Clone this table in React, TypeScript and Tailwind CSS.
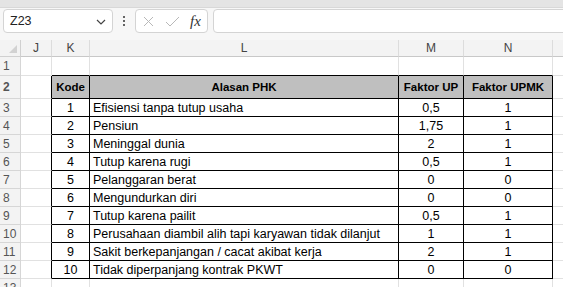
import React from "react";

const rows: [string, string, string, string][] = [
  ["1", "Efisiensi tanpa tutup usaha", "0,5", "1"],
  ["2", "Pensiun", "1,75", "1"],
  ["3", "Meninggal dunia", "2", "1"],
  ["4", "Tutup karena rugi", "0,5", "1"],
  ["5", "Pelanggaran berat", "0", "0"],
  ["6", "Mengundurkan diri", "0", "0"],
  ["7", "Tutup karena pailit", "0,5", "1"],
  ["8", "Perusahaan diambil alih tapi karyawan tidak dilanjut", "1", "1"],
  ["9", "Sakit berkepanjangan / cacat akibat kerja", "2", "1"],
  ["10", "Tidak diperpanjang kontrak PKWT", "0", "0"],
];

const rh =
  "w-[21px] shrink-0 bg-[#f3f3f3] border-r border-b border-[#d6d6d6] text-[#555] text-[12px] pl-[3px] flex items-center";

export default function App() {
  return (
    <div
      className="w-[563px] h-[287px] overflow-hidden bg-white text-black"
      style={{ fontFamily: '"Liberation Sans", Arial, sans-serif' }}
    >
      <div className="h-[8px] bg-[#e4e4e4] border-b border-[#d8d8d8]" />
      <div className="h-[32px] bg-[#f7f7f7] flex items-start pt-[1px] pl-[3px]">
        <div className="w-[110px] h-[24px] bg-white border border-[#d4d4d4] rounded-[4px] flex items-center pl-[6px] pr-[6px]">
          <span className="text-[12.5px] text-[#222] flex-1">Z23</span>
          <svg width="10" height="6" viewBox="0 0 10 6" className="mt-[1px]">
            <path d="M1 1 L5 5 L9 1" fill="none" stroke="#444" strokeWidth="1.2" />
          </svg>
        </div>
        <div className="w-[22px] h-[24px] flex flex-col items-center justify-center gap-[2px]">
          <div className="w-[2px] h-[2px] bg-[#333] rounded-full" />
          <div className="w-[2px] h-[2px] bg-[#333] rounded-full" />
          <div className="w-[2px] h-[2px] bg-[#333] rounded-full" />
        </div>
        <div className="w-[73px] h-[24px] bg-white border border-[#d4d4d4] rounded-[4px] flex items-center pl-[7px]">
          <svg width="11" height="11" viewBox="0 0 11 11">
            <path d="M1 1 L10 10 M10 1 L1 10" stroke="#b8b8b8" strokeWidth="1" fill="none" />
          </svg>
          <svg width="15" height="11" viewBox="0 0 15 11" className="ml-[11px]">
            <path d="M1 6 L5 10 L14 1" stroke="#b8b8b8" strokeWidth="1" fill="none" />
          </svg>
          <span
            className="ml-[10px] text-[15px] italic text-[#333] leading-none"
            style={{ fontFamily: '"Liberation Serif", "Times New Roman", serif' }}
          >
            fx
          </span>
        </div>
        <div className="flex-1 h-[24px] ml-[5px] mr-[-6px] bg-white border border-[#d4d4d4] rounded-[4px]" />
      </div>

      <div className="flex h-[17px] text-[12px] text-[#444]">
        <div className="w-[21px] shrink-0 bg-[#f3f3f3] border-r border-b border-[#d0d0d0] relative">
          <svg width="8" height="8" viewBox="0 0 8 8" className="absolute right-[3px] bottom-[3px]">
            <path d="M8 0 L8 8 L0 8 Z" fill="#d2d2d2" />
          </svg>
        </div>
        <div className="w-[31px] shrink-0 bg-[#f3f3f3] border-r border-b border-r-[#dcdcdc] border-b-[#c8c8c8] flex items-center justify-center">J</div>
        <div className="w-[38px] shrink-0 bg-[#f3f3f3] border-r border-b border-r-[#dcdcdc] border-b-[#c8c8c8] flex items-center justify-center">K</div>
        <div className="w-[309px] shrink-0 bg-[#f3f3f3] border-r border-b border-r-[#dcdcdc] border-b-[#c8c8c8] flex items-center justify-center">L</div>
        <div className="w-[65px] shrink-0 bg-[#f3f3f3] border-r border-b border-r-[#dcdcdc] border-b-[#c8c8c8] flex items-center justify-center">M</div>
        <div className="w-[89px] shrink-0 bg-[#f3f3f3] border-r border-b border-r-[#dcdcdc] border-b-[#c8c8c8] flex items-center justify-center">N</div>
        <div className="flex-1 bg-[#f3f3f3] border-b border-b-[#c8c8c8]" />
      </div>

      <div className="flex h-[19px]">
        <div className={rh}>1</div>
        <div className="w-[31px] shrink-0 border-r border-b border-[#e1e1e1]" />
        <div className="w-[38px] shrink-0 border-r border-b border-r-[#e1e1e1] border-b-black" />
        <div className="w-[309px] shrink-0 border-r border-b border-r-[#e1e1e1] border-b-black" />
        <div className="w-[65px] shrink-0 border-r border-b border-r-[#e1e1e1] border-b-black" />
        <div className="w-[89px] shrink-0 border-r border-b border-r-[#e1e1e1] border-b-black" />
        <div className="flex-1 border-b border-[#e1e1e1]" />
      </div>

      <div className="flex h-[23px] text-[11.5px] font-bold">
        <div className={rh}>2</div>
        <div className="w-[31px] shrink-0 border-r border-b border-r-black border-b-[#e1e1e1]" />
        <div className="w-[38px] shrink-0 bg-[#bfbfbf] border-r border-b border-black flex items-center justify-center pt-[1px]">Kode</div>
        <div className="w-[309px] shrink-0 bg-[#bfbfbf] border-r border-b border-black flex items-center justify-center pt-[1px]">Alasan PHK</div>
        <div className="w-[65px] shrink-0 bg-[#bfbfbf] border-r border-b border-black flex items-center justify-center pt-[1px]">Faktor UP</div>
        <div className="w-[89px] shrink-0 bg-[#bfbfbf] border-r border-b border-black flex items-center justify-center pt-[1px]">Faktor UPMK</div>
        <div className="flex-1 border-b border-[#e1e1e1]" />
      </div>

      {rows.map(([k, l, m, n], i) => (
        <div key={k} className="flex h-[18px] text-[12.5px]">
          <div className={rh}>{i + 3}</div>
          <div className="w-[31px] shrink-0 border-r border-b border-r-black border-b-[#e1e1e1]" />
          <div className="w-[38px] shrink-0 border-r border-b border-black flex items-center justify-center pt-[1px]">{k}</div>
          <div className="w-[309px] shrink-0 border-r border-b border-black flex items-center pl-[3px] pt-[1px] whitespace-nowrap">{l}</div>
          <div className="w-[65px] shrink-0 border-r border-b border-black flex items-center justify-center pt-[1px]">{m}</div>
          <div className="w-[89px] shrink-0 border-r border-b border-black flex items-center justify-center pt-[1px]">{n}</div>
          <div className="flex-1 border-b border-[#e1e1e1]" />
        </div>
      ))}

      <div className="flex h-[18px]">
        <div className={rh}>13</div>
        <div className="w-[31px] shrink-0 border-r border-[#e1e1e1]" />
        <div className="w-[38px] shrink-0 border-r border-[#e1e1e1]" />
        <div className="w-[309px] shrink-0 border-r border-[#e1e1e1]" />
        <div className="w-[65px] shrink-0 border-r border-[#e1e1e1]" />
        <div className="w-[89px] shrink-0 border-r border-[#e1e1e1]" />
        <div className="flex-1" />
      </div>
    </div>
  );
}
